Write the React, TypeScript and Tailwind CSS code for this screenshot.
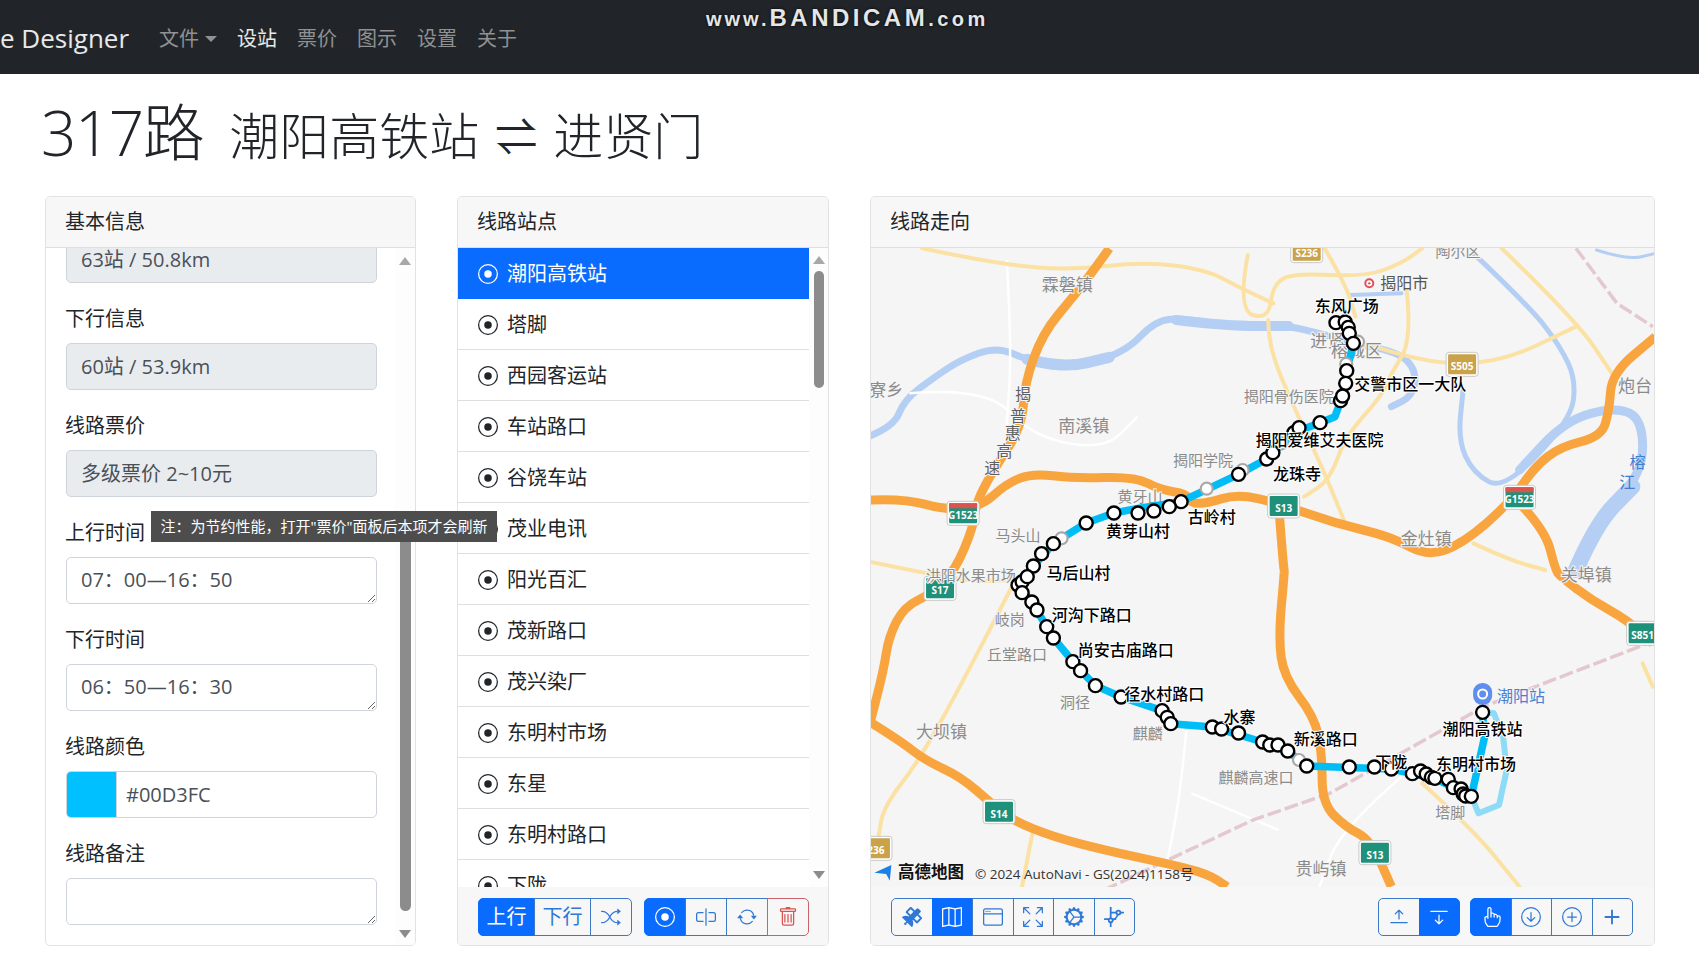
import React from "react";
import {
  BsRecordCircle,
  BsShuffle,
  BsInputCursor,
  BsArrowRepeat,
  BsTrash,
  BsMap,
  BsWindow,
  BsArrowsFullscreen,
  BsGearWideConnected,
  BsArrowBarUp,
  BsArrowBarDown,
  BsHandIndex,
  BsArrowDownCircle,
  BsPlusCircle,
  BsPlus,
} from "react-icons/bs";
import { FaSatellite } from "react-icons/fa";

type Pt = [number, number];

// 地图坐标：取自两张放大图，换算成页面坐标
const a = (x: number, y: number): Pt => [860 + x / 1.95, 240 + y / 3];
const b = (x: number, y: number): Pt => [860 + x / 1.95, 570 + y / 3];

const smooth = (pts: Pt[]) => {
  let d = `M${pts[0][0]} ${pts[0][1]}`;
  for (let i = 1; i < pts.length - 1; i++) {
    const mx = (pts[i][0] + pts[i + 1][0]) / 2;
    const my = (pts[i][1] + pts[i + 1][1]) / 2;
    d += ` Q${pts[i][0]} ${pts[i][1]} ${mx} ${my}`;
  }
  const last = pts[pts.length - 1];
  return d + ` L${last[0]} ${last[1]}`;
};
const line = (pts: Pt[]) => "M" + pts.map((p) => p.join(" ")).join(" L");

const highways: Pt[][] = [
  [a(490, 25), a(460, 90), a(420, 170), a(360, 280), a(325, 430), a(320, 560), a(260, 700), a(230, 790), a(225, 860), a(190, 990), b(145, 70), b(90, 110), b(60, 200), b(50, 300), b(25, 450)],
  [b(22, 455), b(80, 510), b(130, 570), b(200, 620), b(260, 700), b(300, 750), b(380, 800), b(480, 840), b(600, 880), b(680, 910), b(720, 950)],
  [a(22, 780), a(90, 775), a(170, 810), a(240, 800), a(290, 730), a(340, 700), a(420, 715), a(540, 710), a(590, 750), a(640, 760), a(650, 790), a(680, 790), a(740, 762), a(820, 790), a(930, 850), a(1040, 890), a(1110, 950), a(1180, 910), a(1270, 790), a(1320, 680), a(1370, 620), a(1450, 590), a(1465, 510), a(1470, 400), a(1555, 290)],
  [a(820, 790), a(830, 990), b(832, 0), b(820, 200), b(830, 320), b(890, 440), b(905, 550), b(905, 700), b(950, 770), b(1000, 810), b(1040, 950)],
  [a(1290, 790), a(1340, 870), a(1360, 990), b(1370, 20), b(1430, 90), b(1500, 150), b(1550, 220)],
];

const minorRoads: Pt[][] = [
  [a(125, 25), a(280, 75), a(420, 90), a(560, 65), a(680, 90), a(740, 140), a(810, 190)],
  [a(760, 45), a(740, 210), a(800, 240), a(810, 130), a(850, 100), a(990, 110), a(1060, 70), a(1100, 25)],
  [a(910, 25), a(950, 130), a(970, 230)],
  [a(1070, 150), a(1080, 300), a(1040, 400), a(1020, 470), a(950, 590), a(920, 720), a(870, 770)],
  [a(800, 240), a(800, 320), a(850, 500), a(880, 600), a(910, 700), a(950, 850)],
  [a(990, 310), a(1100, 370), a(1250, 370), a(1400, 260)],
  [a(1255, 25), a(1400, 240), a(1470, 400)],
  [a(1200, 910), a(1270, 960), a(1340, 990)],
  [b(300, 50), b(210, 320), b(120, 570), b(50, 710), b(40, 800)],
  [b(340, 790), b(320, 950)],
  [b(1100, 640), b(1200, 780), b(1290, 950)],
  [b(1530, 280), b(1550, 350)],
  [a(22, 965), a(100, 990), b(220, 35), b(300, 30)],
];

const whiteRoads: Pt[][] = [
  [a(290, 60), a(300, 320), a(290, 560)],
  [a(100, 460), a(250, 440), a(340, 590), a(480, 630), a(545, 530)],
  [b(640, 480), b(630, 660), b(600, 900)],
  [b(650, 670), b(820, 780)],
  [b(1060, 620), b(940, 780), b(900, 950)],
];

const rivers: { pts: Pt[]; w: number }[] = [
  { pts: [a(20, 590), a(70, 560), a(90, 480), a(150, 410), a(200, 360), a(270, 320), a(330, 360), a(400, 390), a(520, 340), a(580, 240), a(640, 235), a(720, 260), a(830, 255), a(900, 280), a(970, 310), a(1060, 340), a(1090, 400), a(1080, 470), a(1040, 500)], w: 7 },
  { pts: [a(330, 358), a(400, 385), a(490, 352)], w: 11 },
  { pts: [a(620, 240), a(720, 258), a(840, 258)], w: 10 },
  { pts: [a(960, 165), a(1060, 160)], w: 4 },
  { pts: [a(1200, 40), a(1310, 200), a(1370, 320), a(1400, 420), a(1390, 540), a(1260, 750), a(1200, 700), a(1170, 600), a(1180, 450)], w: 5 },
  { pts: [a(1400, 990), a(1440, 850), a(1530, 700), a(1530, 540), a(1480, 500), a(1380, 540), a(1290, 690)], w: 9 },
  { pts: [a(1400, 990), a(1440, 850), a(1510, 740)], w: 16 },
  { pts: [a(1440, 30), a(1500, 60), a(1555, 40)], w: 3 },
];

const railway: Pt[] = [b(480, 960), b(770, 750), b(920, 670), b(1220, 410), b(1540, 220)];
const railway2: Pt[] = [a(1400, 25), a(1480, 190), a(1550, 260)];

const routeMain: Pt[] = [
  a(932, 248), a(950, 246), a(966, 310), a(953, 392), a(951, 430), a(945, 468), a(930, 530), a(901, 548), a(850, 578), a(797, 657), a(742, 703), a(630, 785), a(546, 805), a(499, 819), a(445, 849), a(381, 911), a(342, 978),
  b(312, 45), b(339, 96), b(381, 204), b(434, 302), b(463, 347), b(513, 381), b(593, 422), b(610, 461), b(691, 471), b(789, 516), b(838, 543), b(875, 588), b(1040, 597), b(1081, 611), b(1125, 625), b(1196, 679), b(1222, 500), b(1218, 427),
];
const routeReturn: Pt[] = [b(1218, 427), b(1240, 430), b(1258, 500), b(1265, 600), b(1250, 705), b(1210, 730), b(1198, 685)];

const fadedStops: Pt[] = [a(680, 746), a(952, 372), a(826, 610), a(397, 895), a(975, 305), a(750, 690), b(860, 570)];

const stops: Pt[] = [
  a(932, 248), a(950, 246), a(956, 262), a(958, 280), a(966, 310), a(953, 392), a(951, 430), a(941, 482), a(945, 468), a(901, 548), a(850, 578), a(860, 563), a(797, 657), a(809, 638), a(742, 703), a(630, 785), a(607, 800), a(577, 813), a(546, 819), a(499, 819), a(445, 849), a(381, 911), a(358, 941), a(342, 978),
  b(312, 45), b(320, 35), b(330, 20), b(320, 68), b(339, 96), b(349, 120), b(368, 170), b(381, 204), b(419, 275), b(434, 302), b(463, 347), b(513, 381), b(593, 422), b(603, 442), b(610, 461), b(691, 471), b(709, 477), b(742, 489), b(789, 516), b(803, 525), b(819, 525), b(838, 543), b(875, 588), b(958, 591), b(1007, 591), b(1040, 597), b(1081, 611), b(1097, 603), b(1108, 612), b(1118, 622), b(1125, 625), b(1151, 628), b(1161, 653), b(1176, 657), b(1180, 672), b(1185, 678), b(1196, 679), b(1218, 427),
];

const grayLabels: [string, Pt, number?][] = [
  ["霖磐镇", a(408, 135)], ["进贤", a(915, 302)], ["榕城区", a(972, 332)], ["揭阳骨伤医院", a(840, 467), 15], ["南溪镇", a(440, 557)], ["揭阳学院", a(673, 660), 15], ["黄牙山", a(550, 768), 15], ["马头山", a(312, 885), 15], ["金灶镇", a(1108, 897)], ["炮台", a(1515, 438)], ["寮乡", a(55, 450)], ["陶尔区", a(1170, 34), 15],
  ["洪阳水果市场", b(220, 15), 15], ["岐岗", b(296, 148), 15], ["丘堂路口", b(310, 252), 15], ["洞径", b(423, 397), 15], ["麒麟", b(565, 490), 15], ["大坝镇", b(163, 487)], ["麒麟高速口", b(776, 620), 15], ["塔脚", b(1155, 727), 15], ["关埠镇", b(1420, 15)], ["贵屿镇", b(903, 897)],
];

const stationLabels: [string, Pt][] = [
  ["东风广场", a(953, 198)], ["交警市区一大队", a(1077, 433)], ["揭阳爱维艾夫医院", a(900, 600)], ["龙珠寺", a(856, 703)], ["古岭村", a(690, 832)], ["黄芽山村", a(546, 872)],
  ["马后山村", b(430, 8)], ["河沟下路口", b(456, 135)], ["尚安古庙路口", b(522, 240)], ["径水村路口", b(597, 372)], ["水寨", b(744, 440)], ["新溪路口", b(912, 508)], ["下陇", b(1040, 575)], ["潮阳高铁站", b(1218, 477)], ["东明村市场", b(1205, 583)],
];

const shields: [string, Pt, string][] = [
  ["G1523", a(205, 820), "#1f9079"], ["S13", a(830, 798), "#1f9079"], ["S505", a(1178, 373), "#c9a24a"], ["S236", a(875, 32), "#c9a24a"], ["G1523", a(1290, 772), "#1f9079"],
  ["S17", b(160, 55), "#1f9079"], ["S14", b(275, 725), "#1f9079"], ["S13", b(1008, 848), "#1f9079"], ["S851", b(1530, 190), "#1f9079"], ["236", b(35, 835), "#c9a24a"],
];

const RouteMap = () => (
  <svg viewBox="873 248 783 639" className="block w-[783px] h-[639px] bg-[#f5f5f5]">
    {rivers.map((r, i) => (
      <path key={i} d={smooth(r.pts)} fill="none" stroke="#b5cff4" strokeWidth={r.w} strokeLinecap="round" />
    ))}
    {whiteRoads.map((r, i) => (
      <path key={i} d={smooth(r)} fill="none" stroke="#ffffff" strokeWidth="2.5" />
    ))}
    <path d={line(railway)} fill="none" stroke="#e3c9cf" strokeWidth="3.5" strokeDasharray="14 4" />
    <path d={line(railway2)} fill="none" stroke="#e3c9cf" strokeWidth="3.5" strokeDasharray="14 4" />
    {minorRoads.map((r, i) => (
      <path key={i} d={smooth(r)} fill="none" stroke="#fbe2a4" strokeWidth="4" strokeLinecap="round" />
    ))}
    {highways.map((r, i) => (
      <path key={i} d={smooth(r)} fill="none" stroke="#f9a53f" strokeWidth="9" strokeLinejoin="round" />
    ))}
    {shields.map(([t, p, c], i) => (
      <g key={i}>
        <rect x={p[0] - 16} y={p[1] - 12} width="32" height="24" rx="3" fill="#fff" stroke="#c8c8c8" />
        <rect x={p[0] - 14} y={p[1] - 10} width="28" height="20" rx="1" fill={c} />
        {t[0] === "G" && <rect x={p[0] - 14} y={p[1] - 10} width="28" height="5" fill="#d9534f" />}
        <text x={p[0]} y={p[1] + 6} textAnchor="middle" fontSize="10" fontWeight="700" fill="#fff">
          {t}
        </text>
      </g>
    ))}
    {grayLabels.map(([t, p, s], i) => (
      <text key={i} x={p[0]} y={p[1] + 6} textAnchor="middle" fontSize={s ?? 17} fill="#8b8b8b" stroke="#f5f5f5" strokeWidth="2" paintOrder="stroke">
        {t}
      </text>
    ))}
    {/* 竖排的路名 */}
    {[["揭", 322, 480], ["普", 312, 545], ["惠", 302, 597], ["高", 285, 650], ["速", 262, 703]].map(([t, x, y], i) => (
      <text key={i} x={a(x as number, y as number)[0]} y={a(x as number, y as number)[1]} textAnchor="middle" fontSize="16" fill="#5f5f5f" stroke="#f5f5f5" strokeWidth="2" paintOrder="stroke">
        {t}
      </text>
    ))}
    {[["榕", 1520, 685], ["江", 1500, 745]].map(([t, x, y], i) => (
      <text key={i} x={a(x as number, y as number)[0]} y={a(x as number, y as number)[1]} textAnchor="middle" fontSize="16" fill="#3f7fd0">
        {t}
      </text>
    ))}
    <circle cx={a(997, 130)[0]} cy={a(997, 130)[1]} r="4" fill="#fff" stroke="#e0505a" strokeWidth="2" />
    <circle cx={a(997, 130)[0]} cy={a(997, 130)[1]} r="1.2" fill="#e0505a" />
    <text x={a(1065, 130)[0]} y={a(1065, 130)[1] + 6} textAnchor="middle" fontSize="16" fill="#555">
      揭阳市
    </text>

    <path d={line(routeReturn)} fill="none" stroke="#8edbf7" strokeWidth="6" strokeLinejoin="round" />
    <path d={line(routeMain)} fill="none" stroke="#00bdf5" strokeWidth="7.5" strokeLinejoin="round" />

    {/* 潮阳站的火车站标记 */}
    <rect x={b(1218, 372)[0] - 9.5} y={b(1218, 372)[1] - 11} width="19" height="22" rx="9" fill="#5f8fee" />
    <circle cx={b(1218, 372)[0]} cy={b(1218, 372)[1]} r="4.5" fill="none" stroke="#fff" strokeWidth="2" />
    <text x={b(1293, 378)[0]} y={b(1293, 378)[1] + 6} textAnchor="middle" fontSize="16" fill="#4b7fd1" stroke="#f5f5f5" strokeWidth="2" paintOrder="stroke">
      潮阳站
    </text>

    {fadedStops.map((p, i) => (
      <circle key={i} cx={p[0]} cy={p[1]} r="6" fill="#fff" stroke="#a8a8a8" strokeWidth="2.2" />
    ))}
    {stops.map((p, i) => (
      <circle key={i} cx={p[0]} cy={p[1]} r="6.5" fill="#fff" stroke="#000" strokeWidth="2.4" />
    ))}
    {stationLabels.map(([t, p], i) => (
      <text key={i} x={p[0]} y={p[1] + 6} textAnchor="middle" fontSize="16" fontWeight="500" fill="#000" stroke="#fff" strokeWidth="2" paintOrder="stroke">
        {t}
      </text>
    ))}

    <polygon points={`${b(65, 885).join(",")} ${b(32, 908).join(",")} ${b(55, 912).join(",")} ${b(62, 932).join(",")}`} fill="#1c7fe6" />
    <text x={b(78, 907)[0]} y={b(78, 907)[1] + 6} fontSize="16.5" fontWeight="700" fill="#111">
      高德地图
    </text>
    <text x={b(228, 912)[0]} y={b(228, 912)[1] + 5} fontSize="13.5" fill="#333">
      © 2024 AutoNavi - GS(2024)1158号
    </text>
  </svg>
);

const Arrow = ({ up, tone }: { up?: boolean; tone: string }) => (
  <svg width="12" height="8" viewBox="0 0 12 8" className={`shrink-0 ${tone}`}>
    <polygon points={up ? "6,0 12,8 0,8" : "0,0 12,0 6,8"} fill="currentColor" />
  </svg>
);

const Card = ({ title, children }: { title: string; children: React.ReactNode }) => (
  <section className="h-[750px] flex flex-col border border-[#e2e2e2] rounded-[5px] overflow-hidden bg-white">
    <div className="h-[51px] shrink-0 flex items-center px-[19px] bg-[#f7f7f7] border-b border-[#dfdfdf] text-[20px] text-[#212529]">{title}</div>
    {children}
  </section>
);

const Field = ({ label, children }: { label: string; children: React.ReactNode }) => (
  <div className="mb-[20px]">
    <div className="h-[30px] leading-[32px] mb-[10px] -ml-px text-[20px] text-[#212529]">{label}</div>
    {children}
  </div>
);

const ReadBox = ({ value, className }: { value: string; className?: string }) => (
  <div className={`h-[47px] flex items-center px-[14px] bg-[#e9ecef] border border-[#ced4da] rounded-[5px] text-[20px] text-[#495057] ${className ?? ""}`}>{value}</div>
);

const TextBox = ({ value }: { value?: string }) => (
  <textarea
    readOnly
    defaultValue={value}
    className="block w-full h-[47px] px-[14px] py-[7px] bg-white border border-[#ced4da] rounded-[5px] text-[20px] leading-[30px] text-[#495057] outline-none overflow-hidden"
  />
);

const BasicInfo = () => (
  <div className="flex-1 flex min-h-0">
    <div className="flex-1 min-w-0 overflow-hidden pl-[20px] pr-[18px]">
      <ReadBox value="63站 / 50.8km" className="-mt-[12px] mb-[20px]" />
      <Field label="下行信息">
        <ReadBox value="60站 / 53.9km" />
      </Field>
      <Field label="线路票价">
        <ReadBox value="多级票价 2~10元" />
      </Field>
      <Field label="上行时间">
        <TextBox value="07：00—16：50" />
      </Field>
      <Field label="下行时间">
        <TextBox value="06：50—16：30" />
      </Field>
      <Field label="线路颜色">
        <div className="h-[47px] flex bg-white border border-[#ced4da] rounded-[5px] overflow-hidden">
          <div className="w-[49px] bg-[#00c0ff]" />
          <div className="flex-1 flex items-center px-[9px] text-[20px] text-[#495057] border-l border-[#ced4da]">#00D3FC</div>
        </div>
      </Field>
      <Field label="线路备注">
        <TextBox />
      </Field>
    </div>
    <div className="w-[20px] shrink-0 flex flex-col items-center bg-[#fdfdfd]">
      <Arrow up tone="text-[#a8a8a8] mt-[9px]" />
      <div className="w-[11px] h-[380px] mt-[266px] rounded-b-[6px] bg-[#8c8c8c]" />
      <Arrow tone="text-[#8c8c8c] mt-[19px]" />
    </div>
  </div>
);

const STOPS = ["潮阳高铁站", "塔脚", "西园客运站", "车站路口", "谷饶车站", "茂业电讯", "阳光百汇", "茂新路口", "茂兴染厂", "东明村市场", "东星", "东明村路口", "下陇"];

const StopList = () => (
  <div className="flex-1 flex min-h-0 overflow-hidden">
    <ul className="flex-1 min-w-0 overflow-hidden">
      {STOPS.map((name, i) => (
        <li
          key={name}
          className={`h-[51px] shrink-0 flex items-center gap-[9px] pl-[20px] pt-[2px] text-[20px] border-b ${
            i === 0 ? "bg-[#0a6cff] text-white border-[#0a6cff]" : "text-[#212529] border-[#dfdfdf]"
          }`}
        >
          <BsRecordCircle className="w-[20px] h-[20px] shrink-0" />
          {name}
        </li>
      ))}
    </ul>
    <div className="w-[19px] shrink-0 flex flex-col items-center bg-[#fdfdfd]">
      <Arrow up tone="text-[#a8a8a8] mt-[8px]" />
      <div className="w-[10px] h-[117px] mt-[7px] rounded-[5px] bg-[#8c8c8c]" />
      <div className="flex-1" />
      <Arrow tone="text-[#8c8c8c] mb-[8px]" />
    </div>
  </div>
);

const BTN = "h-[38px] flex items-center justify-center -ml-px first:ml-0 first:rounded-l-[5px] last:rounded-r-[5px] border";
const ON = "bg-[#0a6cff] border-[#0a6cff] text-white";
const OFF = "border-[#3c78c4] text-[#2f78d6]";

const Btn = ({ on, w = "w-[42px]", children, className }: { on?: boolean; w?: string; children: React.ReactNode; className?: string }) => (
  <div className={`${BTN} ${w} ${className ?? (on ? ON : OFF)}`}>{children}</div>
);

// 这个图标在图标库里没有合适的，自己画
const BezierIcon = () => (
  <svg viewBox="0 0 20 20" className="w-[22px] h-[22px]" fill="none" stroke="currentColor" strokeWidth="1.6">
    <path d="M7 1v18M7 6h12M1 12h11M7 13C11 13 13 10 14 6" />
    <circle cx="14" cy="6" r="1.8" fill="#f7f7f7" />
    <circle cx="7" cy="13" r="1.8" fill="#f7f7f7" />
  </svg>
);

const Footer = ({ children, className }: { children: React.ReactNode; className: string }) => (
  <div className={`flex-1 bg-[#f7f7f7] flex items-start pt-[11px] ${className}`}>{children}</div>
);

const ICON = "w-[20px] h-[20px]";

export default function App() {
  return (
    <div className="relative w-[1699px] h-[956px] overflow-hidden bg-white font-['Open_Sans','Noto_Sans_CJK_SC',sans-serif]">
      <nav className="relative h-[74px] flex items-center pt-[3px] bg-[#212529]">
        <span className="text-[26px] text-white/90">e Designer</span>
        <div className="flex ml-[20px] text-[20px] text-[#8f9193]">
          <span className="px-[10px] flex items-center gap-[6px]">
            文件
            <span className="w-0 h-0 border-x-[6px] border-x-transparent border-t-[6px] border-t-[#8f9193]" />
          </span>
          <span className="px-[10px] text-white/90">设站</span>
          <span className="px-[10px]">票价</span>
          <span className="px-[10px]">图示</span>
          <span className="px-[10px]">设置</span>
          <span className="px-[10px]">关于</span>
        </div>
        <div className="absolute left-[706px] top-0 flex items-baseline font-['Liberation_Sans',sans-serif] font-bold text-[#e6e6e6] [text-shadow:0_0_3px_#000]">
          <span className="text-[20px] tracking-[3px]">www.</span>
          <span className="text-[24px] tracking-[3.5px]">BANDICAM</span>
          <span className="text-[20px] tracking-[3.5px]">.com</span>
        </div>
      </nav>

      <header className="h-[122px] pl-[41px] pb-[6px] flex items-center text-[#212529] font-light">
        <span className="text-[62px] leading-none tracking-[-1.5px]">317路</span>
        <span className="ml-[26px] mt-[8px] text-[50px] leading-none whitespace-nowrap flex items-center">
          潮阳高铁站
          <span className="mx-[16px] text-[42px] font-normal">⇌</span>
          进贤门
        </span>
      </header>

      <main className="pl-[45px] flex gap-[41px]">
        <div className="relative w-[371px]">
          <Card title="基本信息">
            <BasicInfo />
          </Card>
          <div className="absolute left-[106px] top-[315px] h-[31px] w-[346px] z-10 flex items-center justify-center whitespace-nowrap bg-[#4d4d4d] text-[15px] text-white">
            注：为节约性能，打开"票价"面板后本项才会刷新
          </div>
        </div>
        <div className="w-[372px]">
          <Card title="线路站点">
            <div className="h-[639px] flex flex-col">
              <StopList />
            </div>
            <Footer className="pl-[20px] gap-[12px]">
              <div className="flex">
                <Btn on w="w-[57px]"><span className="text-[20px]">上行</span></Btn>
                <Btn w="w-[57px]"><span className="text-[20px]">下行</span></Btn>
                <Btn><BsShuffle className={ICON} /></Btn>
              </div>
              <div className="flex">
                <Btn on><BsRecordCircle className={ICON} /></Btn>
                <Btn><BsInputCursor className={ICON} /></Btn>
                <Btn><BsArrowRepeat className={ICON} /></Btn>
                <Btn className="border-[#c9636b] text-[#d9534f] z-10"><BsTrash className={ICON} /></Btn>
              </div>
            </Footer>
          </Card>
        </div>
        <div className="w-[785px]">
          <Card title="线路走向">
            <RouteMap />
            <Footer className="pl-[20px] pr-[21px] justify-between">
              <div className="flex">
                <Btn w="w-[41.5px]"><FaSatellite className={ICON} /></Btn>
                <Btn on w="w-[41.5px]"><BsMap className={ICON} /></Btn>
                <Btn w="w-[41.5px]"><BsWindow className={ICON} /></Btn>
                <Btn w="w-[41.5px]"><BsArrowsFullscreen className={ICON} /></Btn>
                <Btn w="w-[41.5px]"><BsGearWideConnected className={ICON} /></Btn>
                <Btn w="w-[41.5px]"><BezierIcon /></Btn>
              </div>
              <div className="flex gap-[10px]">
                <div className="flex">
                  <Btn w="w-[41.5px]"><BsArrowBarUp className={ICON} /></Btn>
                  <Btn on w="w-[41.5px]"><BsArrowBarDown className={ICON} /></Btn>
                </div>
                <div className="flex">
                  <Btn on w="w-[41.5px]"><BsHandIndex className={ICON} /></Btn>
                  <Btn w="w-[41.5px]"><BsArrowDownCircle className={ICON} /></Btn>
                  <Btn w="w-[41.5px]"><BsPlusCircle className={ICON} /></Btn>
                  <Btn w="w-[41.5px]"><BsPlus className="w-[30px] h-[30px]" /></Btn>
                </div>
              </div>
            </Footer>
          </Card>
        </div>
      </main>
    </div>
  );
}
